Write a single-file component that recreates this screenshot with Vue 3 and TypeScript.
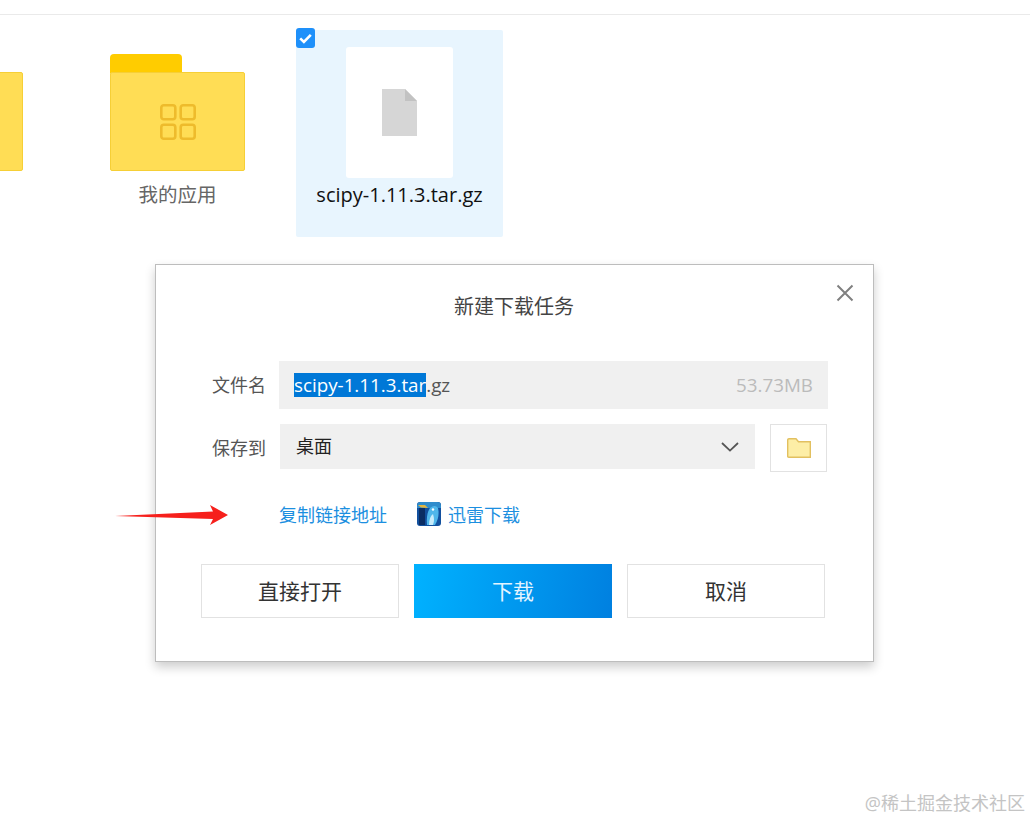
<script setup lang="ts">
const files: string[] = ['a', 'b']
void files
</script>

<template>
  <div class="page">
    <div class="topbar"></div>
    <div class="files">
      <div class="folder-item first">
        <div class="folder"><div class="tab"></div><div class="body"></div></div>
      </div>
      <div class="folder-item">
        <div class="folder">
          <div class="tab"></div>
          <div class="body">
            <svg width="36" height="36" viewBox="0 0 36 36" fill="none" stroke="#eebb2c" stroke-width="2.6">
              <rect x="1.3" y="1.3" width="14" height="14" rx="2.5" />
              <rect x="20.7" y="1.3" width="14" height="14" rx="2.5" />
              <rect x="1.3" y="20.7" width="14" height="14" rx="2.5" />
              <rect x="20.7" y="20.7" width="14" height="14" rx="2.5" />
            </svg>
          </div>
        </div>
        <div class="folder-name">我的应用</div>
      </div>
      <div class="file-item">
        <span class="check">
          <svg width="13" height="11" viewBox="0 0 13 11" fill="none" stroke="#fff" stroke-width="2.6">
            <path d="M1.2 5.4 L4.9 9 L11.8 1.8" />
          </svg>
        </span>
        <div class="file-card">
          <svg class="doc" width="35" height="47" viewBox="0 0 35 47">
            <path d="M0 0 H23 L35 12 V47 H0 Z" fill="#d6d6d6" />
            <path d="M23 0 L35 12 H23 Z" fill="#c2c2c2" />
          </svg>
        </div>
        <div class="file-name">scipy-1.11.3.tar.gz</div>
      </div>
    </div>

    <div class="dialog">
      <svg class="close" width="18" height="18" viewBox="0 0 18 18" fill="none" stroke="#808080" stroke-width="2">
        <path d="M1.5 1.5 L16.5 16.5 M16.5 1.5 L1.5 16.5" />
      </svg>
      <div class="title">新建下载任务</div>
      <div class="row first-row">
        <div class="label">文件名</div>
        <div class="name-input">
          <span class="name-text"><span class="sel">scipy-1.11.3.tar</span>.gz</span>
          <span class="size">53.73MB</span>
        </div>
      </div>
      <div class="row second-row">
        <div class="label">保存到</div>
        <div class="select">
          <span class="select-value">桌面</span>
          <svg width="18" height="10" viewBox="0 0 18 10" fill="none" stroke="#555" stroke-width="1.8">
            <path d="M1 1 L9 8.6 L17 1" />
          </svg>
        </div>
        <div class="browse">
          <svg width="24" height="20" viewBox="0 0 24 20">
            <path d="M.7 18.2 V2 Q.7 .7 2 .7 H9 L11.5 3.8 H23.3 V19.3 H1.8 Q.7 19.3 .7 18.2 Z" fill="#fdeea6" stroke="#e2c060" stroke-width="1.4" />
          </svg>
        </div>
      </div>
      <div class="links">
        <span class="link">复制链接地址</span>
        <span class="thunder">
          <svg width="24" height="24" viewBox="0 0 24 24">
            <rect width="24" height="24" rx="3" fill="#12509e" />
            <path d="M0 4 Q0 0 4 0 H20 Q24 0 24 4 V6 H0 Z" fill="#2f8ccc" />
            <path d="M1 3 H8 L11 6 L4 5.5 Z" fill="#e3b53f" />
            <path d="M2 6 H8 V23 H2 Z" fill="#0b2d63" />
            <path d="M10 23 Q9 12 13 6 Q18 2 21 6 Q23 15 18 23 Z" fill="#4fb6ea" />
            <path d="M12 23 Q12 15 16 12 Q18 18 16 23 Z" fill="#c8ecfb" />
            <circle cx="16" cy="7.5" r="1.2" fill="#fff" />
          </svg>
        </span>
        <span class="link">迅雷下载</span>
      </div>
      <div class="actions">
        <button class="btn">直接打开</button>
        <button class="btn primary">下载</button>
        <button class="btn">取消</button>
      </div>
    </div>

    <svg class="arrow" width="116" height="24" viewBox="0 0 116 24">
      <path d="M0 12 L98 7.5 L95 1 L113 11 L95 21 L98 15 Z" fill="#f6201c" />
    </svg>
    <div class="watermark">@稀土掘金技术社区</div>
  </div>
</template>

<style scoped>
.page {
  position: relative;
  width: 1030px;
  height: 820px;
  overflow: hidden;
  background: #fff;
  font-family: "Open Sans", "Noto Sans CJK SC", sans-serif;
}
.topbar {
  height: 14px;
  border-bottom: 1px solid #eaeaea;
}
.files {
  display: flex;
  align-items: flex-start;
  height: 222px;
}
.folder-item {
  width: 135px;
  margin-top: 39px;
  margin-left: 87px;
  flex: none;
}
.folder-item.first {
  margin-left: -112px;
}
.folder {
  height: 117px;
  display: flex;
  flex-direction: column;
}
.tab {
  width: 72px;
  height: 19px;
  background: #ffcc00;
  border-radius: 4px 4px 0 0;
  margin-bottom: -1px;
}
.body {
  flex: 1;
  display: flex;
  align-items: center;
  justify-content: center;
  background: #ffdd55;
  border: 1px solid #f6cf36;
  border-radius: 2px;
}
.folder-name {
  margin-top: 11px;
  text-align: center;
  font-size: 19.5px;
  line-height: 26px;
  color: #666;
}
.file-item {
  position: relative;
  margin-top: 15px;
  margin-left: 51px;
  width: 207px;
  height: 207px;
  flex: none;
  background: #e8f5fe;
  border-radius: 2px;
  display: flex;
  flex-direction: column;
  align-items: center;
  padding-top: 17px;
  box-sizing: border-box;
}
.check {
  position: absolute;
  left: 0;
  top: -2px;
  width: 19px;
  height: 20px;
  background: #1e90fa;
  border-radius: 3px;
  display: flex;
  align-items: center;
  justify-content: center;
}
.file-card {
  width: 107px;
  height: 131px;
  background: #fff;
  border-radius: 3px;
  display: flex;
  align-items: center;
  justify-content: center;
}
.doc {
  margin-right: 1px;
}
.file-name {
  margin-top: 3px;
  font-size: 20px;
  line-height: 28px;
  color: #111;
}
.dialog {
  position: relative;
  box-sizing: border-box;
  width: 719px;
  height: 398px;
  margin-left: 155px;
  margin-top: 27px;
  padding: 21px 0 0 45px;
  background: #fff;
  border: 1px solid #bdbdbd;
  box-shadow: 0 5px 10px rgba(0, 0, 0, 0.2);
}
.close {
  position: absolute;
  left: 680px;
  top: 19px;
}
.title {
  margin-left: -46px;
  text-align: center;
  font-size: 20px;
  line-height: 42px;
  color: #444;
}
.row {
  display: flex;
  align-items: flex-start;
  padding-left: 11px;
}
.first-row {
  margin-top: 33px;
}
.second-row {
  margin-top: 15px;
}
.label {
  width: 67px;
  font-size: 18px;
  line-height: 48px;
  color: #555;
}
.name-input {
  box-sizing: border-box;
  width: 549px;
  height: 48px;
  padding: 0 15px;
  display: flex;
  align-items: center;
  justify-content: space-between;
  background: #f0f0f0;
  font-size: 18.8px;
}
.name-text {
  color: #555;
  line-height: 24px;
}
.sel {
  display: inline-block;
  background: #0078d7;
  color: #fff;
  line-height: 24px;
}
.size {
  color: #bbb;
}
.select {
  box-sizing: border-box;
  width: 475px;
  height: 45px;
  margin-left: 1px;
  padding: 0 16px;
  display: flex;
  align-items: center;
  justify-content: space-between;
  background: #f0f0f0;
  font-size: 18px;
  color: #222;
}
.select-value {
  margin-top: -4px;
}
.browse {
  box-sizing: border-box;
  width: 57px;
  height: 48px;
  margin-left: 15px;
  border: 1px solid #e2e2e2;
  display: flex;
  align-items: center;
  justify-content: center;
}
.links {
  display: flex;
  align-items: center;
  height: 24px;
  margin-top: 30px;
  padding-left: 78px;
  font-size: 18px;
  color: #1c8fe0;
}
.thunder {
  display: flex;
  margin-left: 30px;
  margin-right: 7px;
}
.actions {
  display: flex;
  gap: 15px;
  margin-top: 38px;
}
.btn {
  box-sizing: border-box;
  width: 198px;
  height: 54px;
  padding: 0 0 2px;
  background: #fff;
  border: 1px solid #e2e2e2;
  font-family: inherit;
  font-size: 21px;
  color: #333;
}
.btn.primary {
  border: 0;
  color: #e4f4ff;
  background: linear-gradient(100deg, #00b2ff, #0080e0);
}
.arrow {
  position: absolute;
  left: 115px;
  top: 504px;
}
.watermark {
  position: absolute;
  right: 5px;
  top: 790px;
  font-size: 18px;
  line-height: 26px;
  color: #c4c4c4;
}
</style>
